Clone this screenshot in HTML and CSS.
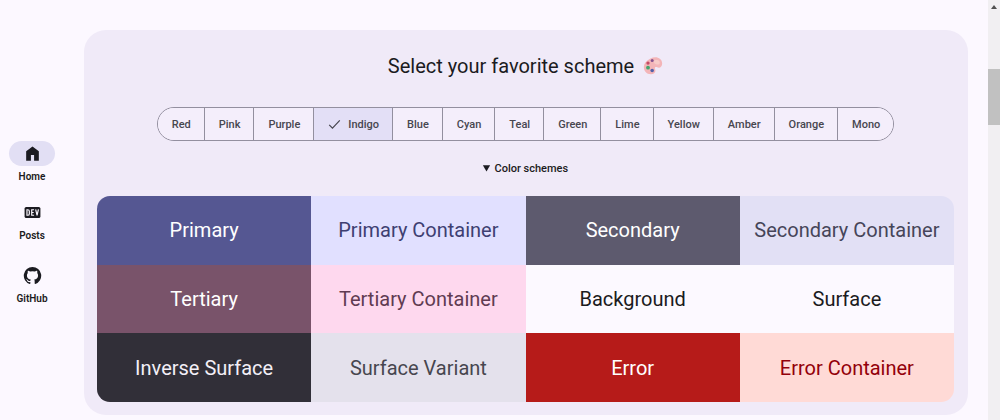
FILE: index.html
```html
<!DOCTYPE html>
<html lang="en">
<head>
<meta charset="utf-8">
<title>Color schemes</title>
<link rel="stylesheet" href="styles.css">
</head>
<body>
<div class="app">
  <nav class="rail" aria-label="Main">
    <a class="rail-item active" href="#home">
      <span class="rail-icon"><svg viewBox="0 0 24 24" width="19" height="19"><path d="M4 21V9l8-6 8 6v12h-6v-7h-4v7z"/></svg></span>
      <span class="rail-label">Home</span>
    </a>
    <a class="rail-item" href="#posts">
      <span class="rail-icon"><svg viewBox="0 0 24 24" width="19" height="19"><rect x="2" y="5" width="20" height="14" rx="2"/><path class="dev-mark" d="M5 8.500v7h1q2 0 2-2v-3q0-2-2-2zM14 8.500h-3v7h3M11 12h2.500M16 8l1.750 7.500L19.500 8"/></svg></span>
      <span class="rail-label">Posts</span>
    </a>
    <a class="rail-item external" href="#github">
      <span class="rail-icon"><svg viewBox="0 0 24 24" width="19" height="19"><path d="M12 1.300a11 11 0 0 0-3.480 21.440c.55.100.75-.24.75-.53v-1.870c-3.060.67-3.710-1.470-3.710-1.470-.5-1.270-1.220-1.610-1.220-1.610-1-.68.080-.67.080-.67 1.100.080 1.680 1.130 1.680 1.130.98 1.680 2.570 1.200 3.200.92.100-.71.380-1.200.7-1.480-2.440-.28-5.010-1.220-5.010-5.430 0-1.200.43-2.180 1.130-2.950-.11-.28-.49-1.400.11-2.910 0 0 .92-.3 3.020 1.120a10.500 10.500 0 0 1 5.500 0c2.100-1.420 3.020-1.120 3.020-1.120.6 1.510.22 2.630.11 2.910.7.770 1.130 1.750 1.130 2.950 0 4.220-2.570 5.150-5.020 5.420.39.340.74 1.010.74 2.040v3.020c0 .29.200.64.760.53A11 11 0 0 0 12 1.300z"/></svg></span>
      <span class="rail-label">GitHub</span>
    </a>
  </nav>
  <main class="content">
    <section class="card">
      <h1 class="title">Select your favorite scheme
        <svg class="palette" viewBox="0 0 24 24" width="20" height="20" aria-hidden="true"><path class="board" d="M9 3C15-.5 23 2 23 9c0 4-3 6-6 4.500-2-1-3.500.5-2.500 2.500 1.500 3-1 6-5 6C4 22 1 18 1 13c0-4 3-7.500 8-10z"/><path class="shine" d="M14 5c4-1 7 1 6 4-1 2-3 1-5 .5-2-1-3-3.500-1-4.500z"/><circle class="purple" cx="11" cy="5.500" r="1.800"/><circle class="red" cx="6" cy="8.500" r="2"/><circle class="green" cx="6" cy="14" r="2.300"/><circle class="blue" cx="11" cy="17.500" r="2.100"/></svg>
      </h1>
      <div class="segments" role="group" aria-label="Scheme">
        <button type="button">Red</button>
        <button type="button">Pink</button>
        <button type="button">Purple</button>
        <button type="button" class="selected" aria-pressed="true"><svg viewBox="0 0 16 16" width="13" height="13"><path d="M1.500 8.500l4 4L14.500 3"/></svg>Indigo</button>
        <button type="button">Blue</button>
        <button type="button">Cyan</button>
        <button type="button">Teal</button>
        <button type="button">Green</button>
        <button type="button">Lime</button>
        <button type="button">Yellow</button>
        <button type="button">Amber</button>
        <button type="button">Orange</button>
        <button type="button">Mono</button>
      </div>
      <details class="schemes" open>
        <summary>Color schemes</summary>
        <div class="swatches">
          <div class="primary">Primary</div>
          <div class="primary-container">Primary Container</div>
          <div class="secondary">Secondary</div>
          <div class="secondary-container">Secondary Container</div>
          <div class="tertiary">Tertiary</div>
          <div class="tertiary-container">Tertiary Container</div>
          <div class="surface">Background</div>
          <div class="surface">Surface</div>
          <div class="inverse-surface">Inverse Surface</div>
          <div class="surface-variant">Surface Variant</div>
          <div class="error">Error</div>
          <div class="error-container">Error Container</div>
        </div>
      </details>
    </section>
  </main>
  <div class="scrollbar" aria-hidden="true">
    <svg viewBox="0 0 12 12" width="12" height="12"><path d="M3 9l3-4 3 4z"/></svg>
    <div class="thumb"></div>
  </div>
</div>
</body>
</html>
```
FILE: styles.css
```css
* { box-sizing: border-box; }
body {
  margin: 0;
  background: #fcf8ff;
  color: #1b1b21;
  font-family: Roboto, "Liberation Sans", sans-serif;
}
.app { display: flex; min-height: 100vh; }

.rail {
  width: 64px;
  display: flex;
  flex-direction: column;
  align-items: center;
  justify-content: center;
  gap: 15px;
  padding-top: 27px;
}
.rail-item {
  display: flex;
  flex-direction: column;
  align-items: center;
  gap: 3px;
  color: #1b1b21;
  text-decoration: none;
}
.rail-item.external { margin-top: 4px; }
.rail-icon {
  display: flex;
  align-items: center;
  justify-content: center;
  width: 46px;
  height: 25px;
  border-radius: 13px;
}
.active .rail-icon { background: #e2dff4; }
.rail-icon svg { fill: #1b1b21; }
.rail-icon .dev-mark { fill: none; stroke: #fcf8ff; stroke-width: 1.500; }
.rail-label { font-size: 10px; line-height: 16px; font-weight: 600; }

.content { flex: 1; min-width: 0; padding: 30px 20px 5px; }
.card {
  padding: 24px 14px 13px 13px;
  border-radius: 22px;
  background: #f0eaf8;
}
.title {
  display: flex;
  align-items: center;
  justify-content: center;
  gap: 9px;
  margin: 0 0 29px;
  font-size: 20px;
  line-height: 24px;
  font-weight: 400;
}
.palette .board { fill: #f3b5b8; }
.palette .shine { fill: #f7cbc8; }
.palette .purple { fill: #86528f; }
.palette .red { fill: #c54b65; }
.palette .green { fill: #43a66d; }
.palette .blue { fill: #5360a8; }

.segments {
  display: flex;
  width: fit-content;
  margin: 0 auto 18px;
  border: 1px solid #938f9f;
  border-radius: 17px;
  overflow: hidden;
}
.segments button {
  display: flex;
  align-items: center;
  gap: 7px;
  height: 32px;
  padding: 1px 13px 0 14px;
  border: 0;
  border-left: 1px solid #938f9f;
  background: #f4eefb;
  color: #47464f;
  font: 500 11px/16px Roboto, "Liberation Sans", sans-serif;
}
.segments button:first-child { border-left: 0; }
.segments .selected { background: #e3dff6; }
.segments svg { fill: none; stroke: #47464f; stroke-width: 1.500; }

.schemes summary {
  width: fit-content;
  margin: 0 auto 18px;
  font-size: 11px;
  line-height: 19px;
  font-weight: 500;
}
.swatches {
  display: grid;
  grid-template-columns: repeat(4, 1fr);
  grid-template-rows: repeat(3, 1fr);
  min-height: 206px;
  border-radius: 13px;
  overflow: hidden;
  font-size: 20px;
  line-height: 28px;
}
.swatches div { display: flex; align-items: center; justify-content: center; white-space: nowrap; }
.primary { background: #555792; color: #fff; }
.primary-container { background: #e1e0ff; color: #3e3f72; }
.secondary { background: #5d5a6e; color: #fff; }
.secondary-container { background: #e2e0f5; color: #464559; }
.tertiary { background: #79536a; color: #fff; }
.tertiary-container { background: #fed8ee; color: #603b52; }
.surface { background: #fcf9ff; color: #1b1b21; }
.inverse-surface { background: #312f38; color: #f3eff7; }
.surface-variant { background: #e4e1ec; color: #47464f; }
.error { background: #b61b19; color: #fff; }
.error-container { background: #ffdad6; color: #93000a; }

.scrollbar { width: 12px; background: #f1eff2; }
.scrollbar svg { display: block; fill: #505050; }
.thumb { height: 56px; margin-top: 57px; background: #c1c1c1; }
```
